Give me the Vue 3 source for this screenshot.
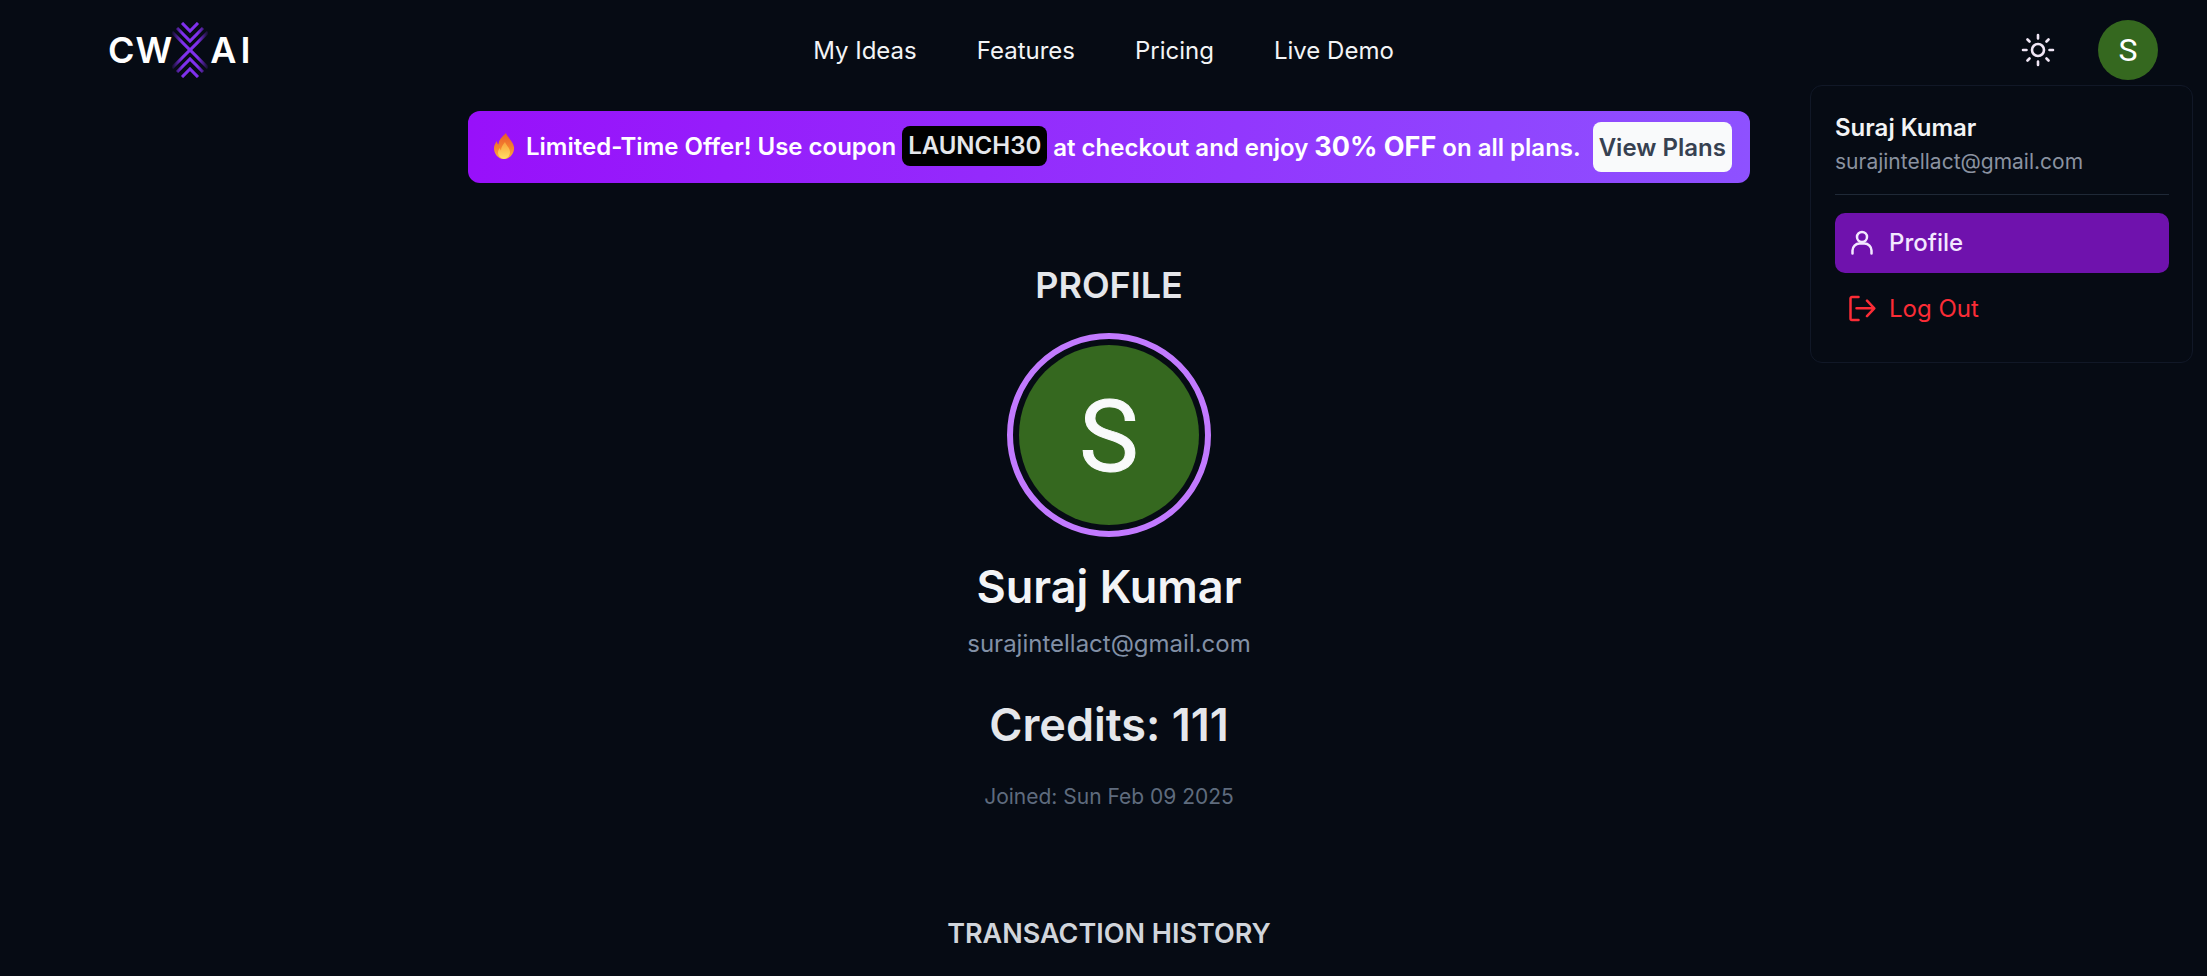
<script setup>
const nav = ['My Ideas', 'Features', 'Pricing', 'Live Demo']
</script>

<template>
  <div class="page">
    <header class="top">
      <div class="logo">
        <span class="lt">CW</span>
        <svg class="mark" width="36" height="56" viewBox="0 0 36 56" fill="none" stroke="url(#fade)" stroke-width="3.1">
          <defs>
            <linearGradient id="fade" gradientUnits="userSpaceOnUse" x1="0" y1="0" x2="36" y2="0">
              <stop offset="0" stop-color="#7c2ae8" stop-opacity="0.1" />
              <stop offset="0.28" stop-color="#7f30ec" />
              <stop offset="0.72" stop-color="#7f30ec" />
              <stop offset="1" stop-color="#7c2ae8" stop-opacity="0.1" />
            </linearGradient>
          </defs>
          <path d="M10 1l8 8 8-8M5 6l13 13L31 6M0 10l18 18 18-18" />
          <path d="M0 46l18-18 18 18M5 50l13-13 13 13M10 55l8-8 8 8" />
        </svg>
        <span class="lt ai">AI</span>
      </div>
      <nav class="nav">
        <a v-for="n in nav" :key="n">{{ n }}</a>
      </nav>
      <div class="right">
        <svg class="sun" width="34" height="34" viewBox="0 0 34 34" fill="none" stroke="#f0e6f5" stroke-width="2.6" stroke-linecap="round">
          <circle cx="17" cy="17" r="6" />
          <path d="M17 2v3.500M17 28.500V32M2 17h3.500M28.500 17H32M6.500 6.500l2 2M25.500 25.500l2 2M6.500 27.500l2-2M25.500 8.500l2-2" />
        </svg>
        <div class="avatar">S</div>
      </div>
    </header>

    <div class="menu">
      <div class="m-name">Suraj Kumar</div>
      <div class="m-mail">surajintellact@gmail.com</div>
      <div class="m-sep"></div>
      <div class="m-item active">
        <svg width="28" height="28" viewBox="0 0 28 28" fill="none" stroke="#f3e8ff" stroke-width="2.5" stroke-linecap="round" stroke-linejoin="round">
          <circle cx="14" cy="9" r="5" />
          <path d="M4.500 25.500v-3a7 7 0 0 1 7-7h5a7 7 0 0 1 7 7v3" />
        </svg>
        Profile
      </div>
      <div class="m-item out">
        <svg width="28" height="28" viewBox="0 0 28 28" fill="none" stroke="#fb2c36" stroke-width="2.5" stroke-linecap="round" stroke-linejoin="round">
          <path d="M10.500 3H4a1.500 1.500 0 0 0-1.500 1.500v20A1.500 1.500 0 0 0 4 26h6.500M8.500 14.300H26M19 6.700l7.300 7.600-7.300 7.900" />
        </svg>
        Log Out
      </div>
    </div>

    <main class="main">
      <div class="banner">
        <svg class="flame" width="22" height="26" viewBox="0 0 22 26">
          <defs>
            <linearGradient id="fl" x1="0" y1="0" x2="0" y2="1">
              <stop offset="0" stop-color="#e8592c" />
              <stop offset="0.6" stop-color="#f5862e" />
              <stop offset="1" stop-color="#fbb040" />
            </linearGradient>
            <linearGradient id="fi" x1="0" y1="0" x2="0" y2="1">
              <stop offset="0" stop-color="#f9a23a" />
              <stop offset="1" stop-color="#ffe066" />
            </linearGradient>
          </defs>
          <path fill="url(#fl)" d="M13 0c1 4 7 8 8 14 .7 6-4 12-10 12S1 21 1 15c0-3 1.500-5 3-7 0 2 .5 3 1.500 3.500C5.500 7 9 4 13 0z" />
          <path fill="url(#fi)" d="M12 9c1 3 5 6 5 10 0 4-3 7-6 7s-6-3-6-6.500c0-2 1-3.500 2-4.500 0 1 .5 2 1 2.500C8 14 10 12 12 9z" />
        </svg>
        <span>Limited-Time Offer! Use coupon</span>
        <span class="code">LAUNCH30</span>
        <span>at checkout and enjoy <b>30% OFF</b> on all plans.</span>
        <button class="plans">View Plans</button>
      </div>
      <h2 class="title">PROFILE</h2>
      <div class="ring"><div class="big">S</div></div>
      <h1 class="name">Suraj Kumar</h1>
      <p class="mail">surajintellact@gmail.com</p>
      <p class="credits">Credits: 111</p>
      <p class="joined">Joined: Sun Feb 09 2025</p>
      <h3 class="hist">TRANSACTION HISTORY</h3>
    </main>
  </div>
</template>

<style>
html, body { margin: 0; background: #060b14; overflow: hidden; }
</style>

<style scoped>
.page { position: relative; height: 976px; overflow: hidden; background: #060b14; color: #fff; font-family: Inter, "Liberation Sans", sans-serif; }
.top { height: 100px; display: grid; grid-template-columns: 1fr auto 1fr; align-items: center; padding: 0 49px; }
.logo { display: flex; align-items: center; height: 60px; margin-left: 59px; }
.lt { font-size: 36px; font-weight: 600; color: #fff; line-height: 1; letter-spacing: 1px; }
.mark { margin: 0 2px 0 -1px; flex: none; }
.ai { letter-spacing: 4px; }
.nav { display: flex; gap: 60px; font-size: 24px; font-weight: 400; color: #f3f4f6; }
.right { display: flex; justify-content: flex-end; align-items: center; gap: 43px; }
.avatar { width: 60px; height: 60px; border-radius: 50%; background: #35681f; display: flex; align-items: center; justify-content: center; font-size: 32px; font-family: Roboto, sans-serif; }
.menu { position: absolute; left: 1810px; top: 85px; width: 383px; height: 278px; box-sizing: border-box; border: 1px solid #111827; border-radius: 12px; padding: 26px 23px 0 24px; background: #060b14; }
.m-name { font-size: 24px; font-weight: 600; color: #f3f4f6; line-height: 32px; }
.m-mail { font-size: 21px; color: #8a92a0; line-height: 32px; margin-top: 2px; }
.m-sep { height: 1px; background: #1f2937; margin: 16px 0 18px; }
.m-item { height: 60px; box-sizing: border-box; padding-bottom: 2px; border-radius: 10px; display: flex; align-items: center; gap: 13px; padding-left: 13px; font-size: 24px; font-weight: 500; }
.active { background: #6f12ad; color: #f3e8ff; }
.out { color: #fb2c36; margin-top: 6px; font-weight: 400; }
.main { display: flex; flex-direction: column; align-items: center; width: 1282px; margin-left: 468px; }
.banner { margin-top: 11px; width: 100%; height: 72px; box-sizing: border-box; border-radius: 12px; background: linear-gradient(90deg, #9810fa, #8e51ff); display: flex; align-items: center; gap: 6px; padding: 0 0 2px 25px; font-size: 24px; font-weight: 600; white-space: pre; }
.flame { flex: none; margin-right: 5px; }
.code { background: #000; color: #e5e7eb; padding: 4px 6px; border-radius: 8px; line-height: 32px; }
.banner b { font-size: 27px; font-weight: 700; }
.plans { height: 50px; padding: 0 6px; border: none; background: #f9fafb; color: #374151; font: 600 24px Inter, sans-serif; border-radius: 8px; margin: 2px 0 0 6px; }
.title { margin: 82px 0 0; font-size: 36px; line-height: 40px; font-weight: 600; color: #e5e7eb; }
.ring { margin-top: 28px; width: 204px; height: 204px; box-sizing: border-box; border: 6px solid #c27aff; border-radius: 50%; padding: 6px; }
.big { width: 180px; height: 180px; box-sizing: border-box; padding-top: 2px; border-radius: 50%; background: #35681f; display: flex; align-items: center; justify-content: center; font-size: 100px; font-weight: 400; -webkit-text-stroke: 1px #f9fafb; font-family: Roboto, sans-serif; color: #f9fafb; }
.name { margin: 22px 0 0; font-size: 45px; line-height: 56px; font-weight: 600; color: #f3f4f6; }
.mail { margin: 13px 0 0; font-size: 24px; line-height: 32px; color: #8290a6; }
.credits { margin: 37px 0 0; font-size: 45px; line-height: 56px; font-weight: 600; color: #e5e7eb; }
.joined { margin: 30px 0 0; font-size: 21px; line-height: 28px; color: #5f6b7e; }
.hist { margin: 105px 0 0; font-size: 27px; line-height: 36px; font-weight: 600; color: #d1d5db; }
</style>
